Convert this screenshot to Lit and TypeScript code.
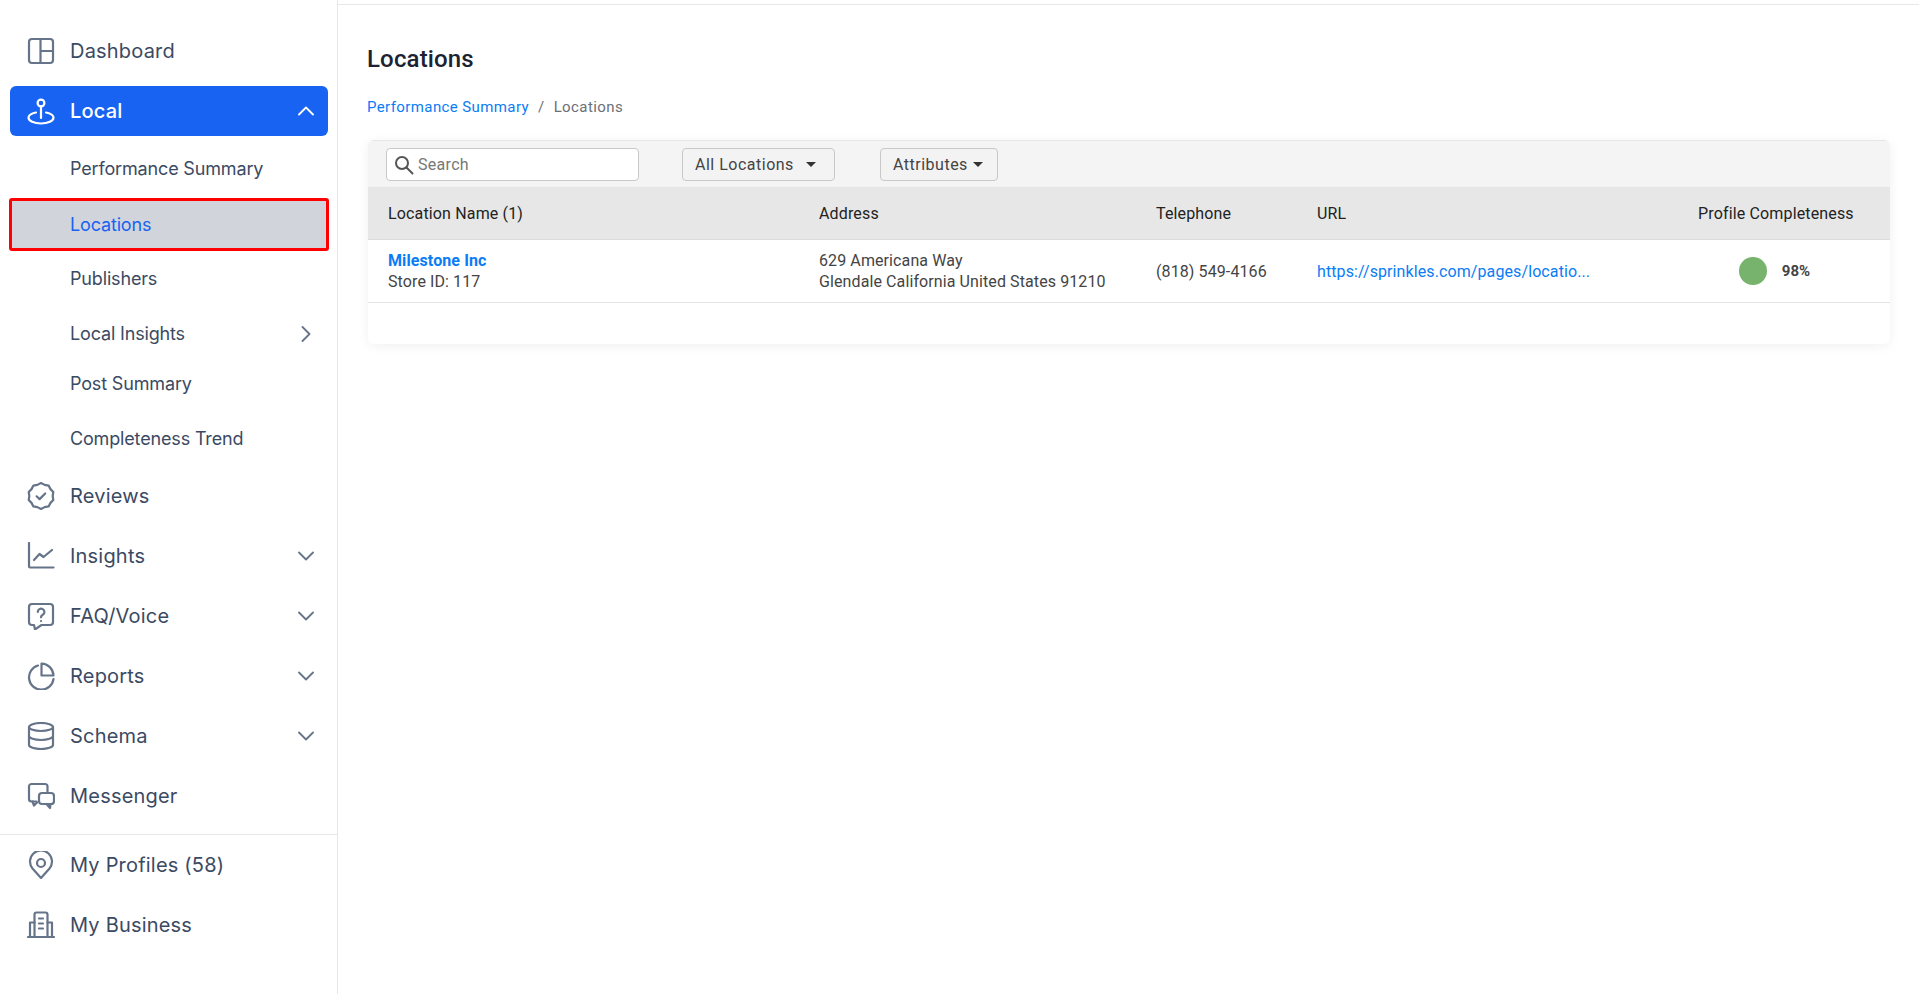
import { LitElement, html, css, svg } from "lit";
import { customElement } from "lit/decorators.js";

const ico = (body: unknown) => html`<svg class="ico" viewBox="0 0 28 28" fill="none" stroke="currentColor" stroke-width="2.2" stroke-linecap="round" stroke-linejoin="round">${body}</svg>`;

const badge = Array.from({ length: 20 }, (_, i) => {
  const a = (-90 + i * 18) * Math.PI / 180;
  const r = i % 2 ? 11.7 : 12.9;
  return `${(14 + r * Math.cos(a)).toFixed(2)},${(14 + r * Math.sin(a)).toFixed(2)}`;
}).join(" ");

const icons: Record<string, unknown> = {
  dashboard: svg`<rect x="2" y="2" width="24" height="24" rx="3"/><path d="M13.5 2v24M13.5 14H26"/>`,
  local: svg`<circle cx="14" cy="6" r="3.4"/><path d="M14 9.5V21"/><path d="M9 15.500C4.500 16.400 1.500 18.400 1.500 20.800 1.500 24 7 26.500 14 26.500S26.500 24 26.500 20.800C26.500 18.400 23.500 16.400 19 15.500"/>`,
  reviews: svg`<polygon points="${badge}"/><path d="M9.600 14.300l3 2.800 5.600-5.600"/>`,
  insights: svg`<path d="M2 1v23.500a1 1 0 0 0 1 1h23.500"/><path d="M7 18l5.500-6 4 3 8.500-7"/>`,
  faq: svg`<path d="M5 2h18a3 3 0 0 1 3 3v15a3 3 0 0 1-3 3H14.500L8 27.500 7 23H5a3 3 0 0 1-3-3V5a3 3 0 0 1 3-3Z"/><path d="M10.800 10a3.300 3.300 0 1 1 5 2.800c-1.100.7-1.800 1.200-1.800 2.500"/><path d="M14 19v.1"/>`,
  reports: svg`<path d="M11 3.500A12.300 12.300 0 1 0 26.500 17"/><path d="M14.500 1.500A12.500 12.500 0 0 1 26.500 13.500H14.500Z"/>`,
  schema: svg`<ellipse cx="14" cy="5" rx="12" ry="4"/><path d="M2 5v18c0 2.200 5.400 4 12 4s12-1.800 12-4V5"/><path d="M2 14c0 2.200 5.400 4 12 4s12-1.800 12-4"/>`,
  messenger: svg`<path d="M9.500 19.500H4.500A2.500 2.500 0 0 1 2 17V4.500A2.500 2.500 0 0 1 4.500 2H18a2.500 2.500 0 0 1 2.500 2.500V10"/><path d="M5.500 19.500 7 23.500 10 20.500"/><rect x="12" y="11" width="15" height="11" rx="3"/><path d="M19.500 22l3.500 4 .5-4"/>`,
  profiles: svg`<path d="M14 27 5.500 17.500A11 11 0 1 1 22.500 17.500Z"/><circle cx="14" cy="12" r="4"/>`,
  business: svg`<path d="M1 26h26"/><path d="M7.500 26V3.500a2 2 0 0 1 2-2h9a2 2 0 0 1 2 2V26"/><path d="M7.500 11.500H3v14.500M20.500 11.500H25v14.500"/><path d="M12 7.500h4M12 12.500h4M12 17.500h4"/>`,
};

const chev = (d: string) => html`<svg class="chev" viewBox="0 0 16 16" fill="none" stroke="currentColor" stroke-width="1.8" stroke-linecap="round" stroke-linejoin="round"><path d="${d}"/></svg>`;
const DOWN = "M1 4.500l7 7 7-7";
const UP = "M1 11.500l7-7 7 7";
const RIGHT = "M4.500 1l7 7-7 7";

@customElement("app-root")
export class AppRoot extends LitElement {
  static styles = css`
    :host { display: block; font-family: Roboto, "Liberation Sans", sans-serif; color: #333; background: #fff; }
    * { box-sizing: border-box; }
    .page { display: flex; height: 100vh; overflow: hidden; }
    .side { width: 338px; flex: none; border-right: 1px solid #e5e7eb; padding: 26px 0 0; font-family: Inter, sans-serif; color: #3b4a63; display: flex; flex-direction: column; }
    .item { height: 50px; margin: 0 9px 10px 10px; padding: 0 14px 0 17px; display: flex; align-items: center; gap: 15px; font-size: 20px; line-height: 1; border-radius: 6px; letter-spacing: .2px; }
    .ico { width: 28px; height: 28px; color: #667489; flex: none; }
    .label { flex: 1; }
    .chev { width: 16px; height: 16px; color: #667489; flex: none; }
    .item.active { background: #1863f1; color: #fff; font-weight: 500; margin-bottom: 8px; }
    .item.active .ico, .item.active .chev { color: #fff; }
    .subs { display: flex; flex-direction: column; margin-bottom: 7px; }
    .sub { height: 50px; margin: 0 9px 5px 10px; padding: 0 14px 0 60px; display: flex; align-items: center; font-size: 18px; letter-spacing: -.16px; line-height: 1; }
    .sub.tight { margin-bottom: 0; }
    .sub.last { margin-bottom: 0; }
    .sub.cur { background: #d1d5db; color: #1863f1; outline: 3px solid #f00; outline-offset: -2px; border-radius: 2px; height: 51px; margin-bottom: 4px; }
    .rule { height: 1px; background: #e5e7eb; margin: 3px 0 5px; }
    .main { flex: 1; min-width: 0; }
    .topline { height: 5px; border-bottom: 1px solid #e8e8ea; }
    .body { padding: 37px 29px 0 29px; }
    h1 { margin: 0; font-size: 24px; font-weight: 500; line-height: 34px; color: #1b2333; letter-spacing: .15px; }
    .crumbs { margin-top: 19px; font-size: 15px; line-height: 24px; color: #6b6f76; display: flex; gap: 9px; letter-spacing: .4px; }
    .crumbs a { color: #0a7cf5; }
    .card { margin: 21px 0 0 1px; border-radius: 6px; background: #fff; box-shadow: 0 2px 12px rgba(0,0,0,.06); height: 204px; overflow: hidden; }
    .tools { height: 48px; background: #f4f4f4; border-top: 1px solid #e6e6e6; border-bottom: 1px solid #e6e6e6; padding: 7px 0 0 18px; display: flex; align-items: flex-start; }
    .search { width: 253px; height: 33px; background: #fff; border: 1px solid #c8c8c8; border-radius: 4px; display: flex; align-items: center; gap: 4px; padding: 0 0 0 7px; color: #777; font-size: 16px; letter-spacing: .3px; }
    .search svg { width: 20px; height: 20px; flex: none; }
    .btn { height: 33px; border: 1px solid #c8c8c8; border-radius: 4px; background: #f3f3f3; display: flex; align-items: center; padding-left: 12px; font-size: 16px; color: #444; letter-spacing: .5px; }
    .b1 { width: 153px; margin-left: 43px; gap: 12px; }
    .b2 { width: 118px; margin-left: 45px; gap: 5px; }
    .caret { width: 0; height: 0; border-left: 5px solid transparent; border-right: 5px solid transparent; border-top: 5px solid #333; }
    .grid { display: grid; grid-template-columns: 431px 337px 161px 1fr 192px; padding-left: 20px; }
    .head { height: 52px; background: #e7e7e8; border-bottom: 1px solid #dcdcdf; align-items: center; font-size: 16px; color: #222; letter-spacing: .15px; }
    .row { height: 63px; border-bottom: 1px solid #e2e4e8; align-items: center; font-size: 16px; line-height: 21px; color: #444; letter-spacing: .1px; }
    .name { color: #0a7cf5; font-weight: 700; }
    .url { color: #0a7cf5; }
    .center { padding-right: 37px; text-align: center; white-space: nowrap; }
    .score { display: flex; justify-content: center; align-items: center; gap: 15px; padding-right: 39px; font-weight: 700; font-size: 15px; }
    .dot { width: 28px; height: 28px; border-radius: 50%; background: #77b36d; }
  `;

  private item(icon: string, label: string, c?: string, cls = "") {
    return html`<div class="item ${cls}">${ico(icons[icon])}<span class="label">${label}</span>${c ? chev(c) : ""}</div>`;
  }

  render() {
    return html`<div class="page">
      <nav class="side">
        ${this.item("dashboard", "Dashboard")}
        ${this.item("local", "Local", UP, "active")}
        <div class="subs">
          <div class="sub">Performance Summary</div>
          <div class="sub cur">Locations</div>
          <div class="sub">Publishers</div>
          <div class="sub tight"><span class="label">Local Insights</span>${chev(RIGHT)}</div>
          <div class="sub">Post Summary</div>
          <div class="sub last">Completeness Trend</div>
        </div>
        ${this.item("reviews", "Reviews")}
        ${this.item("insights", "Insights", DOWN)}
        ${this.item("faq", "FAQ/Voice", DOWN)}
        ${this.item("reports", "Reports", DOWN)}
        ${this.item("schema", "Schema", DOWN)}
        ${this.item("messenger", "Messenger")}
        <div class="rule"></div>
        ${this.item("profiles", "My Profiles (58)")}
        ${this.item("business", "My Business")}
      </nav>
      <main class="main">
        <div class="topline"></div>
        <div class="body">
          <h1>Locations</h1>
          <div class="crumbs"><a>Performance Summary</a><span>/</span><span>Locations</span></div>
          <section class="card">
            <div class="tools">
              <div class="search"><svg viewBox="0 0 20 20" fill="none" stroke="#555" stroke-width="2" stroke-linecap="round"><circle cx="8" cy="8" r="6"/><path d="M12.500 12.500 18.500 18.500"/></svg><span>Search</span></div>
              <div class="btn b1"><span>All Locations</span><i class="caret"></i></div>
              <div class="btn b2"><span>Attributes</span><i class="caret"></i></div>
            </div>
            <div class="grid head"><div>Location Name (1)</div><div>Address</div><div>Telephone</div><div>URL</div><div class="center">Profile Completeness</div></div>
            <div class="grid row">
              <div><div class="name">Milestone Inc</div><div>Store ID: 117</div></div>
              <div><div>629 Americana Way</div><div>Glendale California United States 91210</div></div>
              <div>(818) 549-4166</div>
              <div class="url">https://sprinkles.com/pages/locatio...</div>
              <div class="score"><i class="dot"></i><span>98%</span></div>
            </div>
          </section>
        </div>
      </main>
    </div>`;
  }
}
